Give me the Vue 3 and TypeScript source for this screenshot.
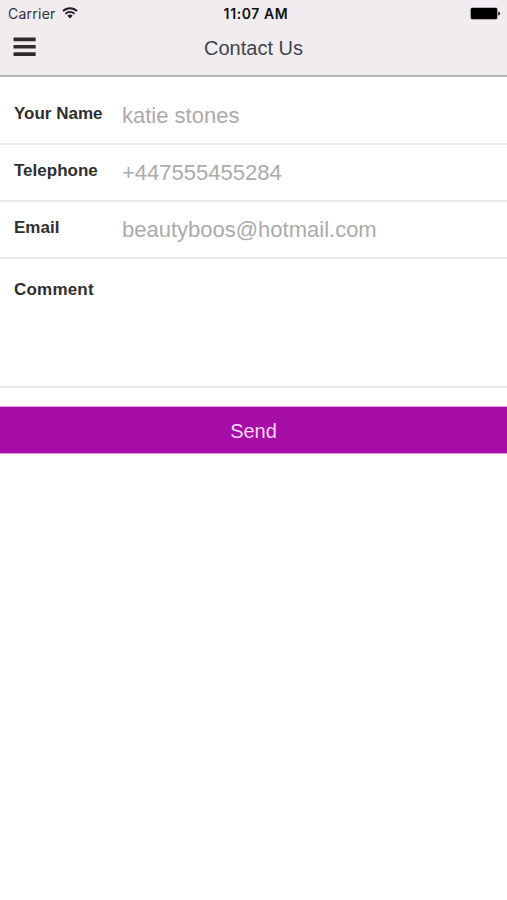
<script setup lang="ts">
import { ref } from 'vue'

interface Field {
  id: string
  label: string
  value: string
  type: string
}

const fields = ref<Field[]>([
  { id: 'name', label: 'Your Name', value: 'katie stones', type: 'text' },
  { id: 'telephone', label: 'Telephone', value: '+447555455284', type: 'tel' },
  { id: 'email', label: 'Email', value: 'beautyboos@hotmail.com', type: 'text' },
])
const comment = ref('')
</script>

<template>
  <div class="screen">
    <header class="header">
      <div class="status">
        <div class="carrier">
          <span class="carrier-name">Carrier</span>
          <svg class="wifi" viewBox="0 0 16 12" width="16" height="12">
            <path d="M1 4.100a10 10 0 0 1 14 0M3.400 6.800a6.500 6.500 0 0 1 9.200 0" fill="none" stroke="#222024" stroke-width="1.900" />
            <path d="M5.300 8.800a3.800 3.800 0 0 1 5.400 0L8 11.500z" fill="#222024" />
          </svg>
        </div>
        <span class="time">11:07 AM</span>
        <svg class="battery" viewBox="0 0 31 13" width="31" height="13">
          <rect x="0.400" y="0.500" width="27.200" height="12" rx="1.800" fill="#77747a" />
          <rect x="1" y="1.100" width="26" height="10.800" rx="1.200" fill="#000" />
          <path d="M28.200 4.500c1.300.2 2 1 2 2s-.7 1.800-2 2z" fill="#2c2a2d" />
        </svg>
      </div>
      <div class="bar">
        <button class="menu" aria-label="Menu">
          <svg viewBox="0 0 23 20" width="23" height="20">
            <rect x="0.500" y="0.600" width="22.200" height="3.600" rx="0.700" fill="#2d2a2e" />
            <rect x="0.500" y="8" width="22.200" height="3.600" rx="0.700" fill="#2d2a2e" />
            <rect x="0.500" y="15.300" width="22.200" height="3.600" rx="0.700" fill="#2d2a2e" />
          </svg>
        </button>
        <h1 class="title">Contact Us</h1>
      </div>
    </header>
    <form class="form" @submit.prevent>
      <div v-for="field in fields" :key="field.id" class="row">
        <label class="label" :for="field.id">{{ field.label }}</label>
        <input :id="field.id" v-model="field.value" class="input" :type="field.type" />
      </div>
      <div class="row comment">
        <label class="label" for="comment">Comment</label>
        <textarea id="comment" v-model="comment" class="input area"></textarea>
      </div>
      <button class="send" type="submit">Send</button>
    </form>
  </div>
</template>

<style>
body {
  background: #fff;
}
</style>

<style scoped>
.screen {
  min-height: 900px;
  background: #fff;
  font-family: "Liberation Sans", Arial, sans-serif;
}
.header {
  box-sizing: border-box;
  height: 77px;
  background: #f0ecf0;
  border-bottom: 2px solid #bab7ba;
}
.status {
  display: grid;
  grid-template-columns: 1fr auto 1fr;
  align-items: center;
  height: 27px;
  padding: 0 6px 0 8px;
  font-family: Inter, sans-serif;
  font-size: 14px;
}
.carrier {
  display: flex;
  align-items: center;
  gap: 6px;
  color: #343136;
}
.carrier-name {
  letter-spacing: 0.25px;
}
.wifi {
  margin-bottom: 2px;
}
.time {
  margin-left: 3px;
  color: #111;
  font-weight: 600;
  letter-spacing: 0.6px;
}
.battery {
  justify-self: end;
}
.bar {
  display: grid;
  grid-template-columns: 60px 1fr 60px;
  align-items: center;
  height: 42px;
}
.menu {
  display: flex;
  padding: 0 0 2px 13px;
  border: 0;
  background: none;
}
.title {
  margin: 0;
  color: #454248;
  font-size: 20px;
  font-weight: 400;
  line-height: 24px;
  text-align: center;
}
.form {
  padding-top: 11px;
}
.row {
  display: flex;
  box-sizing: border-box;
  height: 57px;
  padding: 0 14px;
  border-bottom: 2px solid #eaeaea;
}
.label {
  width: 108px;
  padding-top: 16px;
  color: #2f2f2f;
  font-size: 17px;
  font-weight: 700;
  line-height: 20px;
}
.input {
  flex: 1;
  min-width: 0;
  height: 26px;
  margin: 15px 0 0;
  padding: 0;
  border: 0;
  outline: 0;
  background: none;
  color: #ababab;
  font: 22px/26px "Liberation Sans", Arial, sans-serif;
}
.comment {
  height: 129px;
}
.comment .label {
  padding-top: 21px;
  letter-spacing: 0.2px;
}
.area {
  height: 100px;
  resize: none;
}
.send {
  display: block;
  box-sizing: border-box;
  width: 100%;
  height: 48px;
  margin-top: 18px;
  padding: 2px 0 0;
  border: solid #dc9fdc;
  border-width: 1px 0;
  background: #a60ca6;
  color: #f7d5f7;
  font: 20px/24px "Liberation Sans", Arial, sans-serif;
}
</style>
